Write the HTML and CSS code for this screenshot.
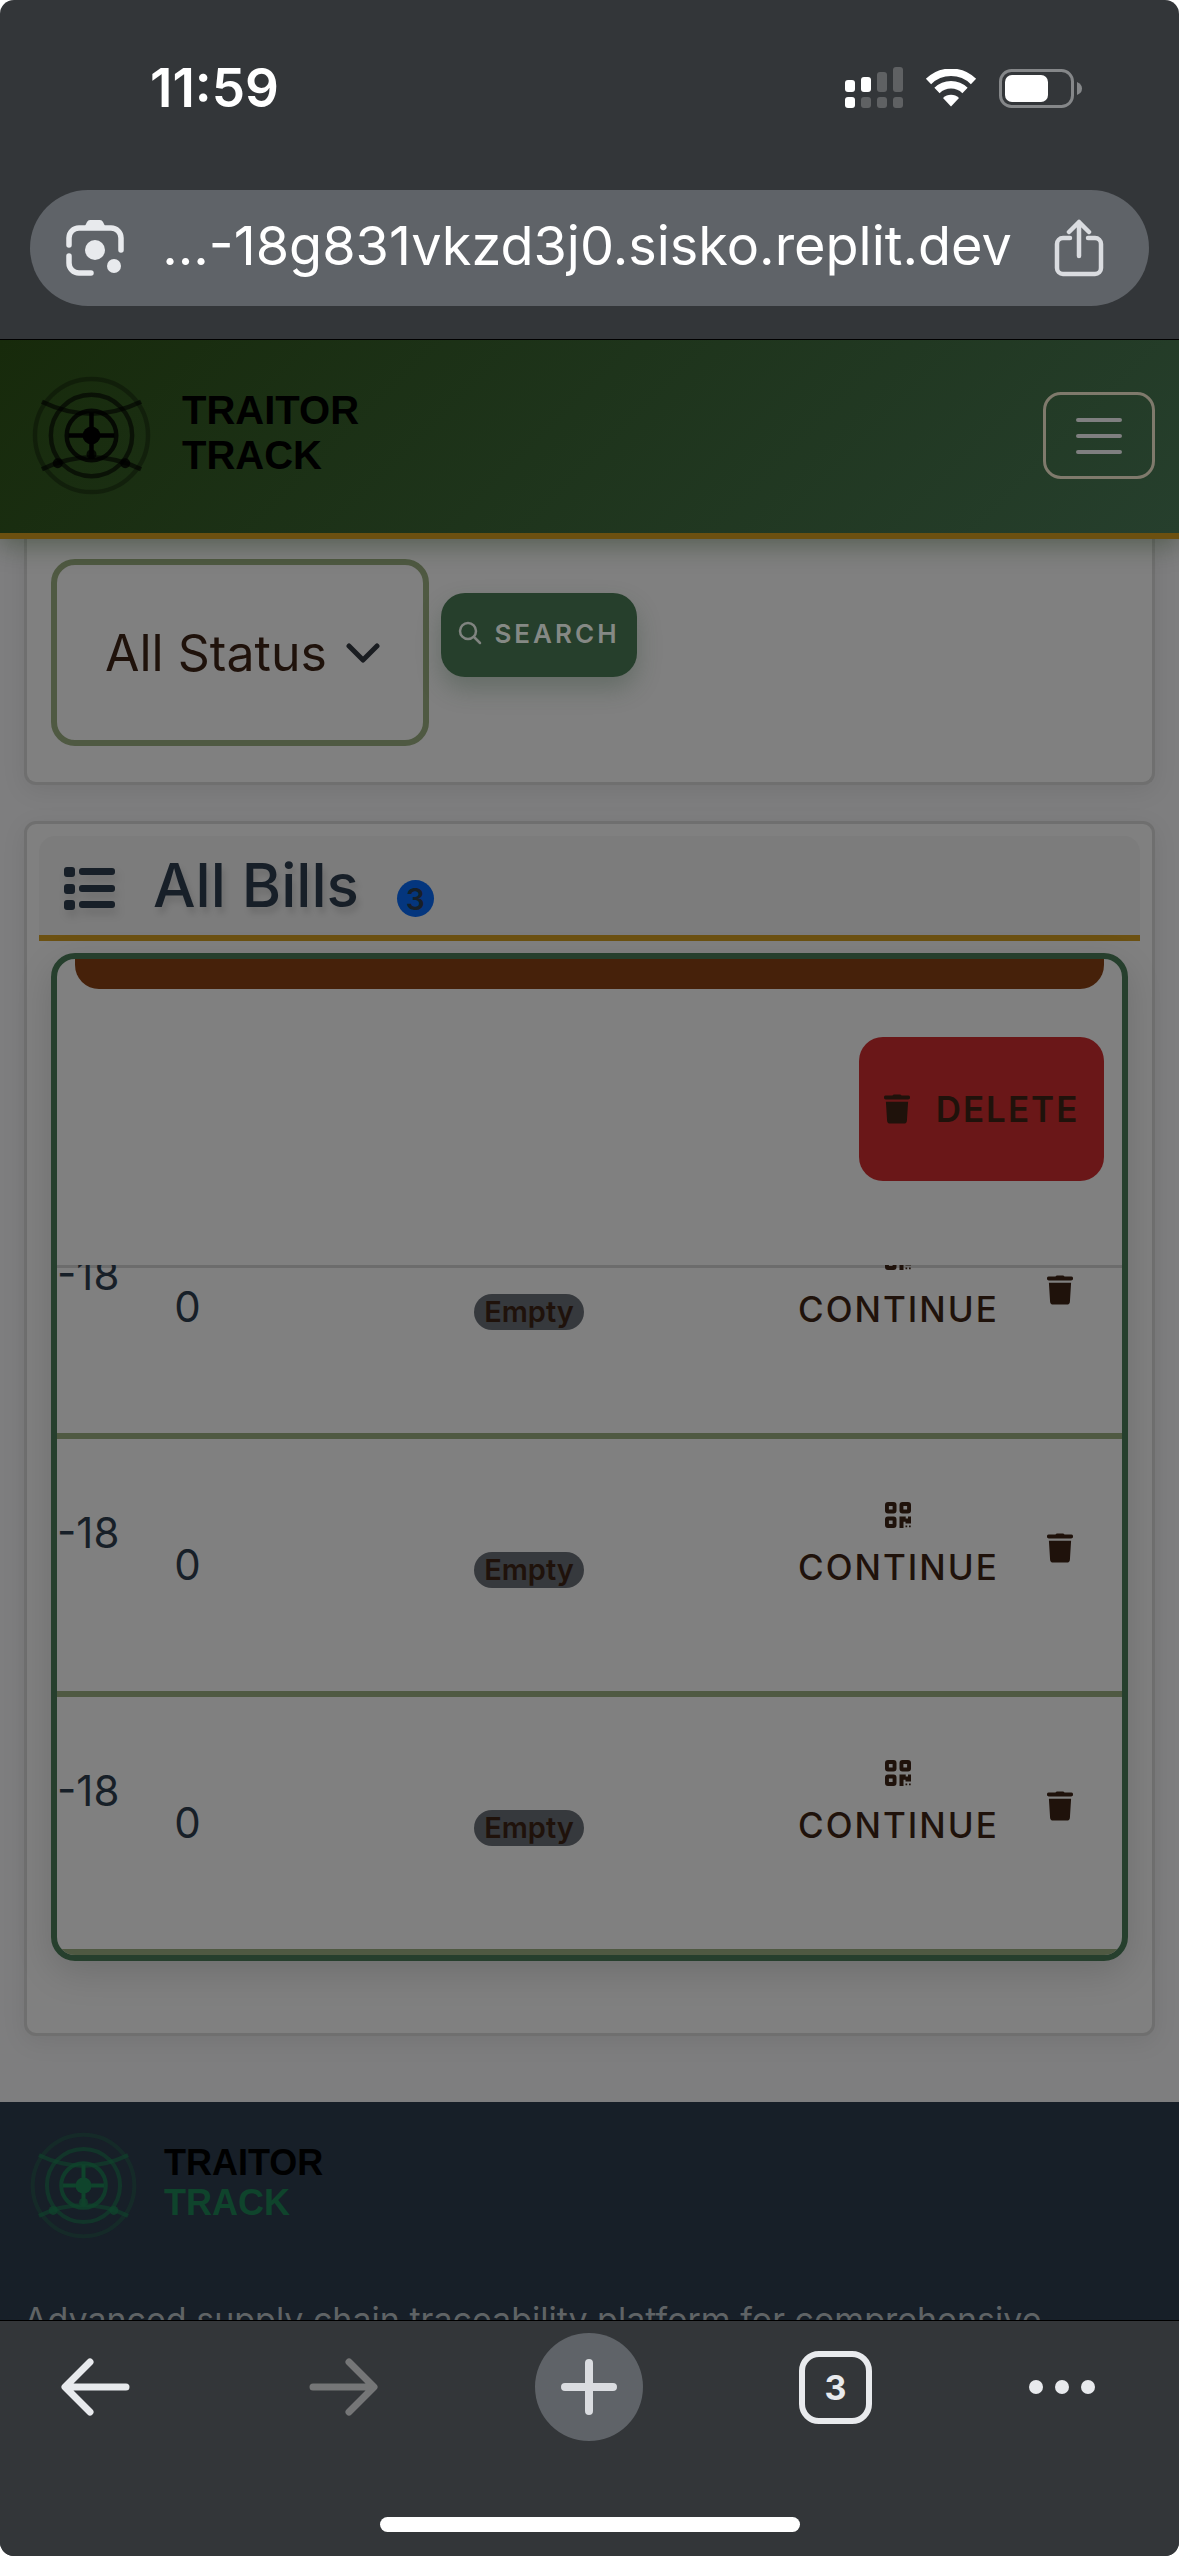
FILE: index.html
```html
<!DOCTYPE html>
<html lang="en">
<head>
<meta charset="utf-8">
<meta name="viewport" content="width=device-width, initial-scale=1">
<title>TraitorTrack - All Bills</title>
<link rel="stylesheet" href="styles.css">
</head>
<body>
<svg width="0" height="0" class="sprite" aria-hidden="true">
  <symbol id="trash" viewBox="0 0 26 30">
    <path d="M8.500 1.600Q9 .500 10.200.500h5.600q1.200 0 1.700 1.100h6.700a1.800 1.800 0 0 1 0 3.800H1.800a1.800 1.800 0 0 1 0-3.800zM1.900 7.700h22.200l-1.200 19a3 3 0 0 1-3 2.800H6.100a3 3 0 0 1-3-2.800z"/>
  </symbol>
  <symbol id="qr" viewBox="0 0 26 26">
    <path fill-rule="evenodd" d="M3 0h5.500a3 3 0 0 1 3 3v5.500a3 3 0 0 1-3 3H3a3 3 0 0 1-3-3V3a3 3 0 0 1 3-3zm.900 3.900v3.700h3.700V3.900zM17.500 0H23a3 3 0 0 1 3 3v5.500a3 3 0 0 1-3 3h-5.500a3 3 0 0 1-3-3V3a3 3 0 0 1 3-3zm.900 3.900v3.700h3.700V3.900zM3 14.500h5.500a3 3 0 0 1 3 3V23a3 3 0 0 1-3 3H3a3 3 0 0 1-3-3v-5.500a3 3 0 0 1 3-3zm.900 3.900v3.700h3.700v-3.700z"/>
    <path d="M14.500 14.500h6.200v2h2.300v-2h3v7h-5.500v-1.800h-2V26h-4zM20.500 23.500h1.700v1.700h-1.700zM24 23.500h1.700v1.700H24z"/>
  </symbol>
  <symbol id="logo" viewBox="0 0 120 120">
    <g fill="none" stroke="currentColor" stroke-width="4.500">
      <circle cx="60" cy="60" r="57" opacity=".3"/>
      <circle cx="60" cy="60" r="41" opacity=".6"/>
      <circle cx="60" cy="60" r="25" opacity=".8"/>
      <path d="M10 26q50 24 100 0M10 94q50-24 100 0" opacity=".6"/>
      <path d="M60 37v46M37 60h46"/>
    </g>
    <g fill="currentColor">
      <circle cx="60" cy="60" r="9"/>
      <circle cx="60" cy="79" r="5" opacity=".8"/>
      <circle cx="26" cy="88" r="5" opacity=".8"/>
      <circle cx="94" cy="88" r="5" opacity=".8"/>
    </g>
  </symbol>
</svg>

<header class="chrome">
  <div class="status">
    <span class="clock">11:59</span>
    <div class="status-icons">
      <svg width="58" height="42" viewBox="0 0 58 42" fill="#fff" aria-hidden="true">
        <rect y="13" width="10" height="12" rx="3"/><rect x="16" y="10" width="10" height="15" rx="3"/>
        <rect y="30" width="10" height="11" rx="3"/>
        <g fill="#5f6163"><rect x="32" y="5" width="10" height="20" rx="3"/><rect x="48" width="10" height="25" rx="3"/>
        <rect x="16" y="30" width="10" height="11" rx="3"/><rect x="32" y="30" width="10" height="11" rx="3"/><rect x="48" y="30" width="10" height="11" rx="3"/></g>
      </svg>
      <svg width="52" height="38" viewBox="0 0 52 38" aria-hidden="true">
        <path d="M3.500 12.500a32 32 0 0 1 45 0M12 21.500a20 20 0 0 1 28 0" fill="none" stroke="#fff" stroke-width="7.500"/>
        <path d="M26 37.500l-8-8.500a11.500 11.500 0 0 1 16 0z" fill="#fff"/>
      </svg>
      <svg width="84" height="39" viewBox="0 0 84 39" aria-hidden="true">
        <rect x="1.500" y="1.500" width="72" height="36" rx="11" fill="none" stroke="#858789" stroke-width="3"/>
        <rect x="6" y="6" width="43" height="27" rx="7" fill="#fff"/>
        <path d="M78 13q5 2 5 6.500t-5 6.500z" fill="#858789"/>
      </svg>
    </div>
  </div>
  <div class="address">
    <button class="plain" aria-label="Search with camera">
      <svg width="58" height="58" viewBox="0 0 58 58" aria-hidden="true">
        <path d="M3 26V19a10 10 0 0 1 10-10h32a10 10 0 0 1 10 10v12M3 37v7a10 10 0 0 0 10 10h12" fill="none" stroke="#e8eaed" stroke-width="5.500" stroke-linecap="round"/>
        <path d="M18 9l3-6q1-2 3-2h10q2 0 3 2l3 6z" fill="#e8eaed"/>
        <circle cx="29" cy="31" r="10" fill="#e8eaed"/><circle cx="48" cy="47" r="7" fill="#e8eaed"/>
      </svg>
    </button>
    <span class="url">...-18g831vkzd3j0.sisko.replit.dev</span>
    <button class="plain" aria-label="Share">
      <svg width="50" height="58" viewBox="0 0 50 58" fill="none" stroke="#dadce0" stroke-width="4.500" stroke-linecap="round" stroke-linejoin="round" aria-hidden="true">
        <path d="M16 19H9a6 6 0 0 0-6 6v24a6 6 0 0 0 6 6h32a6 6 0 0 0 6-6V25a6 6 0 0 0-6-6h-7M25 37V3M15 13L25 3l10 10"/>
      </svg>
    </button>
  </div>
</header>

<div class="viewport">
  <nav class="navbar">
    <a class="brand" href="#"><svg class="mark" aria-hidden="true"><use href="#logo"/></svg><span>TRAITOR<br>TRACK</span></a>
    <button class="toggler" aria-label="Toggle navigation">
      <svg width="48" height="36" viewBox="0 0 48 36" stroke="#7f7f80" stroke-width="4" stroke-linecap="round" aria-hidden="true"><path d="M3 2h42M3 18h42M3 34h42"/></svg>
    </button>
  </nav>

  <main>
    <form class="card filters">
      <div class="select-wrap">
        <select aria-label="Status"><option>All Status</option></select>
        <svg width="34" height="20" viewBox="0 0 34 20" fill="none" stroke="#1a1d21" stroke-width="5" stroke-linecap="round" stroke-linejoin="round" aria-hidden="true"><path d="M3 3l14 14L31 3"/></svg>
      </div>
      <button type="button" class="search">
        <svg width="24" height="24" viewBox="0 0 24 24" fill="none" stroke="#808480" stroke-width="2.500" stroke-linecap="round" aria-hidden="true"><circle cx="10" cy="10" r="8"/><path d="M16 16l6 6"/></svg>
        SEARCH
      </button>
    </form>

    <section class="card bills">
      <header class="card-head">
        <svg width="52" height="46" viewBox="0 0 52 46" fill="#171f28" aria-hidden="true">
          <rect y="1" width="11" height="10" rx="3"/><rect y="18" width="11" height="10" rx="3"/><rect y="34" width="11" height="10" rx="3"/>
          <rect x="15" y="2" width="36" height="7" rx="3"/><rect x="15" y="19" width="36" height="7" rx="3"/><rect x="15" y="35" width="36" height="7" rx="3"/>
        </svg>
        <h2>All Bills</h2>
        <span class="count">3</span>
      </header>
      <div class="table-wrap">
        <div class="bulk">
          <div class="strip"></div>
          <button class="delete"><svg width="26" height="30" aria-hidden="true"><use href="#trash"/></svg>DELETE</button>
        </div>
        <div class="rows">
          <table>
            <colgroup><col class="c-date"><col class="c-num"><col><col class="c-act"></colgroup>
            <tr>
              <td class="date">-18</td><td class="num">0</td><td class="state"><span>Empty</span></td>
              <td><div class="actions"><button class="plain continue"><svg width="26" height="26" aria-hidden="true"><use href="#qr"/></svg>CONTINUE</button><button class="plain remove" aria-label="Delete bill"><svg width="26" height="30" aria-hidden="true"><use href="#trash"/></svg></button></div></td>
            </tr>
            <tr>
              <td class="date">-18</td><td class="num">0</td><td class="state"><span>Empty</span></td>
              <td><div class="actions"><button class="plain continue"><svg width="26" height="26" aria-hidden="true"><use href="#qr"/></svg>CONTINUE</button><button class="plain remove" aria-label="Delete bill"><svg width="26" height="30" aria-hidden="true"><use href="#trash"/></svg></button></div></td>
            </tr>
            <tr>
              <td class="date">-18</td><td class="num">0</td><td class="state"><span>Empty</span></td>
              <td><div class="actions"><button class="plain continue"><svg width="26" height="26" aria-hidden="true"><use href="#qr"/></svg>CONTINUE</button><button class="plain remove" aria-label="Delete bill"><svg width="26" height="30" aria-hidden="true"><use href="#trash"/></svg></button></div></td>
            </tr>
          </table>
        </div>
      </div>
    </section>
  </main>

  <footer class="site-footer">
    <a class="brand small" href="#"><svg class="mark" aria-hidden="true"><use href="#logo"/></svg><span>TRAITOR<br><em>TRACK</em></span></a>
    <p>Advanced supply chain traceability platform for comprehensive</p>
  </footer>
</div>

<div class="toolbar">
  <div class="tools">
    <button class="plain tool" aria-label="Back"><svg width="70" height="58" viewBox="0 0 70 58" fill="none" stroke="#e8eaed" stroke-width="7" stroke-linecap="round" stroke-linejoin="round" aria-hidden="true"><path d="M65 29H5M29 4L4 29l25 25"/></svg></button>
    <button class="plain tool" aria-label="Forward" disabled><svg width="70" height="58" viewBox="0 0 70 58" fill="none" stroke="#757677" stroke-width="7" stroke-linecap="round" stroke-linejoin="round" aria-hidden="true"><path d="M5 29h60M41 4l25 25-25 25"/></svg></button>
    <button class="plain tool new-tab" aria-label="New tab"><svg width="56" height="56" viewBox="0 0 56 56" stroke="#dadce0" stroke-width="8" stroke-linecap="round" aria-hidden="true"><path d="M28 4v48M4 28h48"/></svg></button>
    <button class="plain tool" aria-label="3 open tabs"><span class="tabs">3</span></button>
    <button class="plain" aria-label="Menu"><svg width="68" height="16" viewBox="0 0 68 16" fill="#e8eaed" aria-hidden="true"><circle cx="8" cy="8" r="7"/><circle cx="34" cy="8" r="7"/><circle cx="60" cy="8" r="7"/></svg></button>
  </div>
  <div class="home"></div>
</div>
</body>
</html>
```
FILE: styles.css
```css
* { box-sizing: border-box; }

html { background: #fff; }

body {
  margin: 0;
  height: 100vh;
  display: flex;
  flex-direction: column;
  overflow: hidden;
  border-radius: 14px;
  background: #333639;
  font-family: Inter, "Liberation Sans", sans-serif;
}

svg { display: block; flex: none; }
.sprite { position: absolute; }
button { font-family: inherit; border: 0; padding: 0; margin: 0; }
.plain { background: none; color: #1f120b; }

/* Browser top bar */
.chrome {
  padding: 56px 30px 33px;
  border-bottom: 1px solid #000;
}
.status {
  display: flex;
  justify-content: space-between;
  align-items: center;
  height: 64px;
  padding: 0 66px 0 120px;
  color: #fff;
}
.clock { font-size: 53px; font-weight: 600; }
.status-icons { display: flex; align-items: center; gap: 22px; }
.address {
  display: flex;
  align-items: center;
  justify-content: space-between;
  height: 116px;
  margin-top: 70px;
  padding: 0 45px 0 36px;
  border-radius: 58px;
  background: #5f6368;
}
.url { padding: 0 4px 6px 0; color: #fff; font-size: 54px; white-space: nowrap; }

/* Page */
.viewport {
  flex: 1;
  min-height: 0;
  overflow: hidden;
  display: flex;
  flex-direction: column;
  background: #7e7e7f;
}
.navbar {
  position: relative;
  flex: none;
  display: flex;
  align-items: center;
  justify-content: space-between;
  height: 199px;
  padding: 0 24px 2px 32px;
  border-bottom: 6px solid #6c5010;
  background: linear-gradient(135deg, #172a0b, #263f2d);
  box-shadow: 0 6px 24px rgba(20, 42, 12, .4);
}
.brand {
  display: flex;
  align-items: center;
  gap: 31px;
  color: #000;
  font: bold 40px/45px "Liberation Sans", Arial, sans-serif;
  text-decoration: none;
}
.brand span { padding-bottom: 5px; }
.mark { width: 119px; height: 119px; }
.toggler {
  display: grid;
  place-items: center;
  width: 112px;
  height: 87px;
  border: 3px solid #7f7a6c;
  border-radius: 18px;
  background: none;
}

main { flex: none; padding: 0 24px 66px; }
.card {
  border: 3px solid #6f6f6f;
  border-radius: 12px;
  background: #808080;
  box-shadow: 0 6px 24px rgba(0, 0, 0, .08);
}
.filters {
  display: flex;
  align-items: flex-start;
  gap: 12px;
  margin: 0 0 36px;
  padding: 20px 24px 36px;
  border-top: 0;
  border-radius: 0 0 12px 12px;
}
.select-wrap { display: grid; align-items: center; }
.select-wrap > * { grid-area: 1 / 1; }
.select-wrap svg { justify-self: end; margin-right: 49px; pointer-events: none; }
select {
  appearance: none;
  width: 378px;
  height: 187px;
  padding: 0 0 0 48px;
  border: 6px solid #4f5942;
  border-radius: 24px;
  background: transparent;
  color: #1f120b;
  font: 50px Inter, sans-serif;
}
.search {
  display: flex;
  align-items: center;
  justify-content: center;
  gap: 12px;
  width: 196px;
  height: 84px;
  margin-top: 34px;
  padding-bottom: 4px;
  border-radius: 24px;
  background: #263f2c;
  color: #858985;
  font-size: 26px;
  font-weight: 600;
  letter-spacing: 3px;
  box-shadow: 0 12px 24px rgba(38, 63, 44, .3);
}

.bills { padding: 12px 12px 72px; }
.card-head {
  display: flex;
  align-items: center;
  height: 105px;
  padding-left: 25px;
  border-bottom: 6px solid #6c5112;
  border-radius: 16px 16px 0 0;
  background: #7c7c7c;
}
.card-head svg { margin-top: 6px; filter: drop-shadow(3px 6px 4px rgba(0, 0, 0, .12)); }
h2 {
  margin: 0 0 0 37px;
  color: #171f28;
  font-size: 60px;
  font-weight: 500;
  line-height: 75px;
  text-shadow: 3px 6px 6px rgba(0, 0, 0, .12);
}
.count {
  margin: 26px 0 0 38px;
  width: 37px;
  height: 37px;
  border-radius: 50%;
  background: #04367e;
  color: #171f28;
  font-size: 30px;
  font-weight: 600;
  line-height: 39px;
  text-align: center;
}

.table-wrap {
  margin: 12px 12px 0;
  overflow: hidden;
  border: 6px solid #263f2d;
  border-radius: 24px;
  box-shadow: 0 12px 36px rgba(0, 0, 0, .14);
}
.bulk { padding: 0 18px 84px; }
.strip { height: 30px; border-radius: 0 0 24px 24px; background: #46210a; }
.delete {
  display: flex;
  align-items: center;
  justify-content: center;
  gap: 26px;
  width: 245px;
  height: 144px;
  margin: 48px 0 0 auto;
  border-radius: 24px;
  background: #6a1718;
  color: #1f120b;
  font-size: 35px;
  font-weight: 600;
  letter-spacing: 2px;
}
.delete svg, .continue svg, .remove svg { fill: #1f120b; }

/* The first row is scrolled partly under the bulk actions */
.rows {
  overflow: hidden;
  background: linear-gradient(#6c6c6c, #6c6c6c) top / 100% 3px no-repeat;
}
table {
  width: 100%;
  margin-top: -84px;
  border-collapse: separate;
  border-spacing: 0;
  table-layout: fixed;
}
.c-date { width: 90px; }
.c-num { width: 81px; }
.c-act { width: 326px; }
td {
  height: 258px;
  padding: 0;
  border-bottom: 6px solid #4f5942;
  vertical-align: top;
  color: #171f28;
  font-size: 42px;
  line-height: 60px;
}
.date { padding: 64px 32px 0 0; text-align: right; }
.num { padding-top: 96px; text-align: center; }
.state { padding: 113px 0 0 34px; text-align: center; }
.state span {
  display: block;
  width: 110px;
  height: 36px;
  margin: 0 auto;
  border-radius: 18px;
  background: #36393d;
  color: #1f120b;
  font-size: 29px;
  font-weight: 600;
  line-height: 36px;
}
.actions { display: flex; align-items: flex-start; justify-content: space-between; padding: 63px 49px 0 2px; }
.continue {
  display: flex;
  flex-direction: column;
  align-items: center;
  gap: 12px;
  font-size: 35px;
  font-weight: 500;
  line-height: 54px;
  letter-spacing: 2px;
}
.remove { margin-top: 31px; }

.site-footer {
  flex: 1 0 auto;
  padding: 30px 24px 0;
  background: #171f28;
}
.small { gap: 27px; padding-left: 6px; font-size: 36px; line-height: 40px; }
.small .mark { width: 107px; height: 107px; color: #0f442c; }
.small em { font-style: normal; color: #0f442c; }
.site-footer p {
  margin: 54px 0 0;
  color: #5f6365;
  font-size: 34px;
  line-height: 54px;
  white-space: nowrap;
}

/* Browser bottom bar */
.toolbar {
  flex: none;
  padding: 11px 0 24px;
  border-top: 1px solid #000;
  background: #333639;
}
.tools {
  display: flex;
  align-items: center;
  justify-content: space-between;
  height: 110px;
  padding: 0 83px 0 42px;
}
.tool {
  display: grid;
  place-items: center;
  width: 108px;
  height: 108px;
}
.new-tab { border-radius: 50%; background: #5f6368; }
.tabs {
  display: grid;
  place-items: center;
  width: 73px;
  height: 73px;
  border: 6px solid #e8eaed;
  border-radius: 20px;
  color: #e8eaed;
  font-size: 34px;
  font-weight: 700;
}
.home {
  width: 420px;
  height: 15px;
  margin: 75px auto 0;
  border-radius: 8px;
  background: #fff;
}
```
